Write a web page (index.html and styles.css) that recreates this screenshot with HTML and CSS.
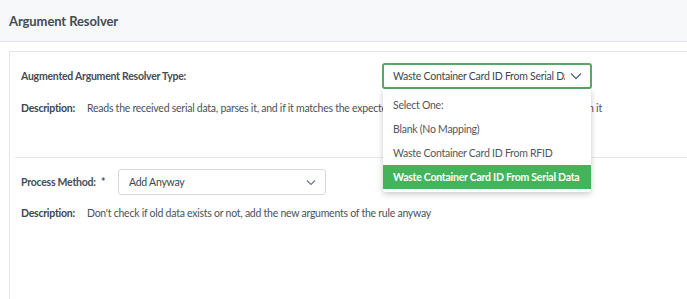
FILE: index.html
```html
<!DOCTYPE html>
<html lang="en">
<head>
    <meta charset="UTF-8">
    <title>Argument Resolver</title>
    <link rel="stylesheet" href="styles.css">
</head>
<body>
    <div class="page-header">
        <h1>Argument Resolver</h1>
    </div>
    <div class="panel">
        <div class="section">
            <div class="field-row">
                <label class="field-label wide">Augmented Argument Resolver Type:</label>
                <div class="select-wrap">
                    <div class="select open">
                        <span class="select-value">Waste Container Card ID From Serial Data</span>
                        <svg class="chevron" width="12" height="8" viewBox="0 0 12 8"><path d="M1 1.5 L6 6.5 L11 1.5" fill="none" stroke="#5a6b7d" stroke-width="1.3"/></svg>
                    </div>
                    <ul class="dropdown">
                        <li>Select One:</li>
                        <li>Blank (No Mapping)</li>
                        <li>Waste Container Card ID From RFID</li>
                        <li class="active">Waste Container Card ID From Serial Data</li>
                    </ul>
                </div>
            </div>
            <p class="description"><strong>Description:</strong><span>Reads the received serial data, parses it, and if it matches the expected format, extracts the card IDs contained within it</span></p>
        </div>
        <div class="section">
            <div class="field-row">
                <label class="field-label">Process Method: <em>*</em></label>
                <div class="select small">
                    <span class="select-value">Add Anyway</span>
                    <svg class="chevron" width="10" height="7" viewBox="0 0 10 7"><path d="M1 1.5 L5 5.5 L9 1.5" fill="none" stroke="#6b7785" stroke-width="1.1"/></svg>
                </div>
            </div>
            <p class="description"><strong>Description:</strong><span>Don't check if old data exists or not, add the new arguments of the rule anyway</span></p>
        </div>
    </div>
</body>
</html>
```
FILE: styles.css
```css
body {
    margin: 0;
    font-family: Lato, "Open Sans", sans-serif;
    font-size: 10.5px;
    letter-spacing: -0.25px;
    color: #3d4650;
    background: #ffffff;
    overflow: hidden;
}

.page-header {
    height: 41px;
    background-color: #f7f8fa;
    border-bottom: 1px solid #dfe2e6;
    display: flex;
    align-items: center;
    padding-left: 9px;
}

.page-header h1 {
    margin: 0;
    font-size: 13px;
    letter-spacing: -0.1px;
    font-weight: bold;
    color: #434b55;
}

.panel {
    margin: 9px 0 0 9px;
    border-top: 1px solid #e3e5e8;
    border-left: 1px solid #e3e5e8;
    height: 260px;
}

.section {
    padding: 11px 0 0 11px;
}

.section + .section {
    margin-left: 5px;
    padding-left: 6px;
    border-top: 1px solid #e6e8eb;
}

.field-row {
    display: flex;
    align-items: center;
}

.field-label {
    font-weight: bold;
    color: #454d57;
    width: 97px;
}

.field-label.wide {
    width: 361px;
}

.field-label em {
    font-style: normal;
    color: #454d57;
    margin-left: 3px;
}

.select-wrap {
    position: relative;
}

.select {
    box-sizing: border-box;
    display: flex;
    align-items: center;
    justify-content: space-between;
    width: 210px;
    height: 26px;
    padding: 0 9px 0 10px;
    border: 1px solid #d5d9de;
    border-radius: 3px;
    background: #ffffff;
    color: #3d4650;
}

.select.open {
    border: 2px solid #5aa765;
    padding-left: 9px;
    padding-right: 8px;
}

.select.small {
    width: 208px;
}

.select-value {
    white-space: nowrap;
    overflow: hidden;
    width: 172px;
}

.dropdown {
    position: absolute;
    top: 26px;
    left: 1px;
    width: 208px;
    box-sizing: border-box;
    margin: 0;
    padding: 4px 0 3px;
    list-style: none;
    background: #ffffff;
    border-radius: 0 0 3px 3px;
    box-shadow: 0 2px 6px rgba(0, 0, 0, 0.22);
    z-index: 2;
}

.dropdown li {
    height: 24px;
    line-height: 24px;
    padding-left: 10px;
    color: #4f5760;
    white-space: nowrap;
}

.dropdown li.active {
    background-color: #44b45a;
    color: #ffffff;
    font-weight: bold;
}

.description {
    margin: 13px 0 0;
    height: 55px;
    color: #4a525b;
}

.description strong {
    color: #3d4650;
    display: inline-block;
    width: 66px;
}

.section + .section .description {
    margin-top: 12px;
}
```
